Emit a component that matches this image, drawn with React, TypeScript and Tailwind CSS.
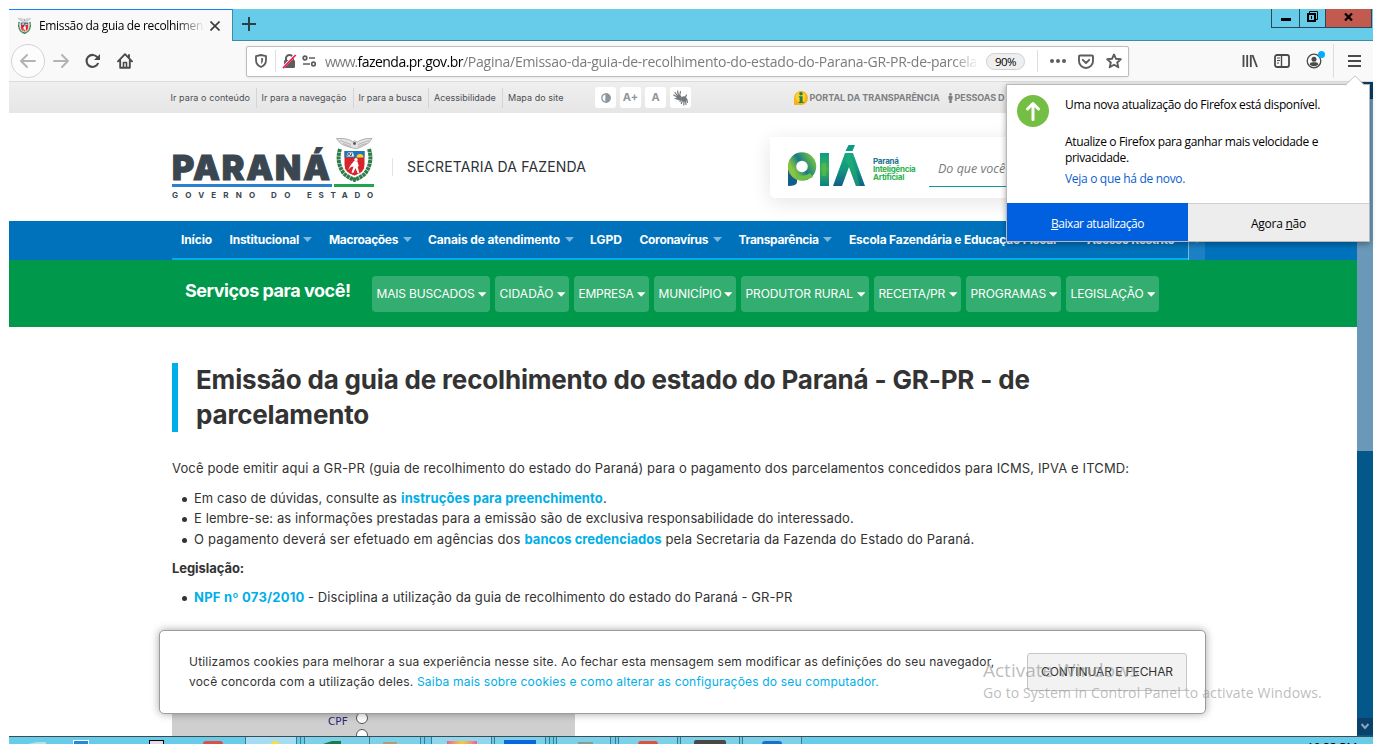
import type { ReactNode } from 'react';

const UI = "font-['Open_Sans',sans-serif]";
const SITE = "font-['Inter',sans-serif]";

function Crest({ className }: { className: string }) {
  return (
    <svg viewBox="0 0 37 44" className={className}>
      <path d="M0.500 0.500 Q9 -0.200 14 2 L17 4 L18.500 2.500 L21 4 L25 2 Q30 -0.200 36 0.500 Q33 6 28 7.500 L23 10 L18.500 10.500 L13 9 Q4 7 0.500 0.500Z" fill="#e2e2e2" stroke="#8a8a8a" strokeWidth="0.600" />
      <path d="M4 2.500 L15 6.500 M7 5.500 L15 8.500 M33 2.500 L22 6.500 M30 5.500 L22 8.500" stroke="#999" strokeWidth="0.600" />
      <circle cx="18.500" cy="5.500" r="1.400" fill="#555" />
      <path d="M4 11 Q0 24 7.500 35 Q12 40 20 42 M33 11 Q37 24 29.500 35 Q25 40 17 42" fill="none" stroke="#2f7d4b" strokeWidth="4" strokeDasharray="3.200 0.500" />
      <path d="M8 12.500 H29 V27 Q29 35 18.500 38 Q8 35 8 27Z" fill="#d8232a" stroke="#fff" strokeWidth="1" />
      <path d="M8.500 13 H28.500 V19.500 H8.500Z" fill="#1b76bd" />
      <path d="M20.500 19.500 A3.500 3.500 0 0 1 27.500 19.500Z" fill="#ffd21f" />
      <path d="M10.500 18.500 L12 14.500 H17 L18 18.500Z" fill="#fff" />
      <path d="M11.500 18 L13 15 L14.500 18 M15 18 L16 15" stroke="#222" strokeWidth="0.800" fill="none" />
      <circle cx="20" cy="21.700" r="1.700" fill="#fff" />
      <path d="M18 23 L21.500 23.500 L22.700 28 L21.700 29 L23.500 35.500 L21.700 35.500 L19.500 30 L17.300 35 L15.500 34.500 L17.500 28.500 L15 29 L12 32 L14.500 27.300Z" fill="#fff" />
    </svg>
  );
}

const Caret = ({ className }: { className: string }) => (
  <svg viewBox="0 0 9 5" className={className} fill="currentColor">
    <path d="M0 0 H9 L4.500 5Z" />
  </svg>
);

function TitleBar() {
  return (
    <div className="flex h-8 bg-[#67ccea] shadow-[inset_0_-1px_0_#3f8ca0]">
      <div className="flex h-8 w-[224px] items-center border-t border-r border-t-[#0a84ff] border-r-[#3f8ca0] bg-[#f9f9fa] pl-2">
        <Crest className="h-4 w-[15px]" />
        <div className="ml-[7px] w-[166px] text-[12px] tracking-[-0.33px] whitespace-nowrap text-black [mask-image:linear-gradient(to_right,#000_82%,transparent)]">
          Emissão da guia de recolhimen
        </div>
        <svg viewBox="0 0 10 10" className="ml-[5px] h-[10px] w-[10px]" stroke="#3c3c3d" strokeWidth="1.600">
          <path d="M0.500 0.500 L9.500 9.500 M9.500 0.500 L0.500 9.500" />
        </svg>
      </div>
      <svg viewBox="0 0 14 14" className="mt-2 ml-[9px] h-[14px] w-[14px]" stroke="#27414c" strokeWidth="2">
        <path d="M7 0 V14 M0 7 H14" />
      </svg>
      <div className="mr-px ml-auto flex h-[19px] border border-t-0 border-[#26495a]">
        <div className="flex w-[28px] items-end justify-center border-r border-[#26495a] pb-[6px]">
          <div className="h-[3px] w-[10px] bg-black" />
        </div>
        <div className="flex w-[26px] items-center justify-center border-r border-[#26495a] pb-[3px]">
          <svg viewBox="0 0 11 11" className="h-[11px] w-[11px]" fill="none" stroke="#000">
            <path d="M2.500 2 V0.500 H10.500 V8.500 H9" />
            <rect x="1" y="3" width="7" height="7" strokeWidth="2" />
            <path d="M4.500 5 V8" />
          </svg>
        </div>
        <div className="flex w-[45px] items-center justify-center bg-[#c35a50] pb-[2px]">
          <svg viewBox="0 0 9 8" className="mr-px h-2 w-[9px]" stroke="#000" strokeWidth="2.200">
            <path d="M1 0.500 L8 7.500 M8 0.500 L1 7.500" />
          </svg>
        </div>
      </div>
    </div>
  );
}

function Toolbar() {
  return (
    <div className="flex h-[41px] items-center border-b border-[#dcdcdd] bg-[#f9f9fa] text-[#4a4a4b]">
      <div className="ml-[2px] flex h-[34px] w-[34px] items-center justify-center rounded-full border border-[#d3d3d4] bg-[#fcfcfc] text-[#b3b3b4]">
        <svg viewBox="0 0 16 14" className="h-[14px] w-4" fill="none" stroke="currentColor" strokeWidth="1.900" strokeLinecap="round" strokeLinejoin="round">
          <path d="M7 1 L1 7 L7 13 M1 7 H15" />
        </svg>
      </div>
      <svg viewBox="0 0 16 14" className="ml-[8px] h-[14px] w-4 text-[#b3b3b4]" fill="none" stroke="currentColor" strokeWidth="1.900" strokeLinecap="round" strokeLinejoin="round">
        <path d="M9 1 L15 7 L9 13 M15 7 H1" />
      </svg>
      <svg viewBox="0 0 16 16" className="ml-4 h-4 w-4" fill="none" stroke="currentColor" strokeWidth="2.100">
        <path d="M13.200 10 A6 6 0 1 1 12.500 4.500" />
        <path d="M15 1 V7 H9Z" fill="currentColor" stroke="none" />
      </svg>
      <svg viewBox="0 0 16 16" className="ml-[16px] h-4 w-4" fill="none" stroke="currentColor" strokeWidth="1.900" strokeLinecap="round" strokeLinejoin="round">
        <path d="M1 8.300 L8 1.200 L15 8.300 M3.200 7.500 V14.800 H12.800 V7.500 M12 2 V4.500" />
        <path d="M6.500 14 V9.500 H9.500 V14" strokeWidth="1.600" />
      </svg>
      <div className="ml-[113px] flex h-[31px] w-[883px] items-center rounded-[2px] border border-[#bdbdbe] bg-white shadow-[0_1px_3px_rgba(0,0,0,0.08)]">
        <svg viewBox="0 0 12 14" className="ml-[8px] h-[14px] w-3" fill="none" stroke="#5d5d5e" strokeWidth="1.800">
          <path d="M6 1 L11 2.200 V6 Q11 11 6 13 Q1 11 1 6 V2.200Z" strokeLinejoin="round" />
          <path d="M6.200 4 V10 Q8 9 8.200 4.300Z" fill="#5d5d5e" stroke="none" />
        </svg>
        <div className="ml-2 h-[22px] w-px bg-[#dedede]" />
        <svg viewBox="0 0 15 15" className="ml-[6px] h-[15px] w-[15px]">
          <path d="M4 6 V4.500 A3.500 3.500 0 0 1 11 4.500 V6" fill="none" stroke="#5d5d5e" strokeWidth="2" />
          <rect x="2" y="6" width="11" height="8" rx="1.200" fill="#5d5d5e" />
          <path d="M0.500 14 L13 1" stroke="#fff" strokeWidth="2.600" />
          <path d="M1 14.200 L13.700 1" stroke="#ff1150" strokeWidth="1.700" />
        </svg>
        <svg viewBox="0 0 15 12" className="ml-[5px] h-3 w-[15px]" fill="none" stroke="#5d5d5e" strokeWidth="1.700">
          <circle cx="3" cy="3" r="1.800" />
          <path d="M7 3 H13 M1 9 H8" />
          <circle cx="11.500" cy="9" r="1.800" />
        </svg>
        <div className="ml-[8px] flex w-[654px] pt-px text-[14px] leading-5 whitespace-nowrap text-[#7b7b7c] [mask-image:linear-gradient(to_right,#000_96%,transparent)]">
          <span className="w-[32.5px] shrink-0 tracking-[-0.98px]">www.</span>
          <span className="w-[105.5px] shrink-0 tracking-[-0.53px] text-black">fazenda.pr.gov.br</span>
          <span className="tracking-[-0.26px]">/Pagina/Emissao-da-guia-de-recolhimento-do-estado-do-Parana-GR-PR-de-parcela</span>
        </div>
        <div className="ml-[7px] flex h-[17px] w-[39px] items-center justify-center rounded-full border border-[#d0d0d1] bg-[#efefef] pt-px text-[11.500px] tracking-[-0.6px] text-black">90%</div>
        <div className="ml-[12px] h-[22px] w-px bg-[#dedede]" />
        <svg viewBox="0 0 16 4" className="ml-[12px] h-1 w-4" fill="#5d5d5e">
          <circle cx="2" cy="2" r="2" />
          <circle cx="8" cy="2" r="2" />
          <circle cx="14" cy="2" r="2" />
        </svg>
        <svg viewBox="0 0 16 15" className="ml-3 h-[15px] w-4" fill="none" stroke="#5d5d5e" strokeWidth="1.900" strokeLinecap="round" strokeLinejoin="round">
          <path d="M2 1.500 H14 Q15 1.500 15 2.500 V7 A7 7 0 0 1 1 7 V2.500 Q1 1.500 2 1.500Z M4.800 5.800 L8 9 L11.200 5.800" />
        </svg>
        <svg viewBox="0 0 16 16" className="ml-3 h-4 w-4" fill="none" stroke="#5d5d5e" strokeWidth="1.900" strokeLinejoin="round">
          <path d="M8 1.500 L10 5.800 L14.800 6.300 L11.200 9.500 L12.300 14.300 L8 11.800 L3.700 14.300 L4.800 9.500 L1.200 6.300 L6 5.800Z" />
        </svg>
      </div>
      <svg viewBox="0 0 16 14" className="ml-[113px] h-[14px] w-4" stroke="currentColor" strokeWidth="1.800" fill="none">
        <path d="M1.500 1 V13 M5.200 1 V13 M8.800 1 V13 M10.500 1 L15 13" />
      </svg>
      <svg viewBox="0 0 16 14" className="ml-[16px] h-[14px] w-4" stroke="currentColor" strokeWidth="1.800" fill="none">
        <rect x="1" y="1" width="14" height="12" rx="2" />
        <path d="M7.500 1 V13" strokeWidth="1.400" />
        <path d="M3 4 H6 M3 6.500 H6 M3 9 H5" strokeWidth="1" />
      </svg>
      <div className="relative ml-[16px] h-4 w-4">
        <svg viewBox="0 0 16 16" className="h-4 w-4">
          <circle cx="8" cy="8" r="6.800" fill="none" stroke="#4a4a4b" strokeWidth="1.300" />
          <circle cx="8" cy="6.200" r="2.500" fill="#4a4a4b" />
          <path d="M3.500 11.500 Q4 9.300 6.500 9.300 H9.500 Q12 9.300 12.500 11.500 Q10.500 13.300 8 13.300 Q5.500 13.300 3.500 11.500Z" fill="#4a4a4b" />
        </svg>
        <div className="absolute -top-[2px] -right-[3px] h-[7px] w-[7px] rounded-full bg-[#00aeff]" />
      </div>
      <div className="ml-[11px] h-[34px] w-px bg-[#dcdcdd]" />
      <svg viewBox="0 0 13 12" className="ml-[14px] h-3 w-[13px]" stroke="currentColor" strokeWidth="2">
        <path d="M0 1 H13 M0 6 H13 M0 11 H13" />
      </svg>
    </div>
  );
}

const accessLinks: [string, string][] = [
  ['Ir para o conteúdo', 'w-[91px] tracking-[0.08px]'],
  ['Ir para a navegação', 'w-[97px] tracking-[0.04px]'],
  ['Ir para a busca', 'w-[75.5px]'],
  ['Acessibilidade', 'w-[74px]'],
  ['Mapa do site', 'w-[79px] tracking-[0.06px]'],
];

function AccessButton({ children }: { children: ReactNode }) {
  return <div className="mr-1 flex h-[21px] w-[21px] items-center justify-center rounded-[3px] bg-white text-[11px] font-bold text-[#8f969d]">{children}</div>;
}

function AccessBar() {
  return (
    <div className="flex h-[31px] items-center bg-gradient-to-b from-[#efefef] to-[#e6e6e6] pl-[161.5px] text-[9px] whitespace-nowrap text-[#4c4f54]">
      {accessLinks.map(([label, cls], i) => (
        <div key={label} className={`relative flex h-5 shrink-0 items-center ${cls}`}>
          {label}
          {i < 4 && <span className="absolute right-[5px] h-5 w-px bg-[#d5d5d5]" />}
        </div>
      ))}
      <div className="ml-[8px] flex w-[197.5px] shrink-0">
        <AccessButton>
          <svg viewBox="0 0 10 10" className="h-[10px] w-[10px]" stroke="#8f969d" fill="none" strokeWidth="1.300">
            <circle cx="5" cy="5" r="4.200" />
            <path d="M5 1 A4 4 0 0 1 5 9Z" fill="#8f969d" />
          </svg>
        </AccessButton>
        <AccessButton>A+</AccessButton>
        <AccessButton>A</AccessButton>
        <AccessButton>
          <svg viewBox="0 0 16 16" className="h-4 w-4" fill="none" stroke="#74777a" strokeLinecap="round">
            <ellipse cx="6" cy="7.500" rx="2.500" ry="2.600" fill="#74777a" stroke="none" />
            <path d="M4.500 6 L2 2.500 M5.500 5.500 L4.500 1 M6.700 5.500 L7.500 1.500 M4 7 L0.800 5 M4 8.800 L2 8.500 M6 10 L8 9" strokeWidth="1.200" />
            <path d="M8.500 7 Q11 5.500 13 7 L14.500 9.500 L12.500 12 L9 11 L7.800 9.500Z" fill="#74777a" stroke="none" />
            <path d="M12.500 7 L13.500 5 M14 10 L14.500 12.500 M12.500 11 L13 14.500 M11 11 L10.800 15 M9.500 10.500 L8.300 13.500 M8.500 9.500 L7 11.500" strokeWidth="1.200" />
          </svg>
        </AccessButton>
      </div>
      <svg viewBox="0 0 16 16" className="h-4 w-4 shrink-0">
        <path d="M1 15 V8 A7 7 0 1 1 8 15Z" fill="#f7b41a" />
        <circle cx="7.500" cy="7" r="5" fill="#fbd337" />
        <circle cx="8" cy="3.800" r="1.800" fill="#28803e" />
        <path d="M5.800 6.300 H9.600 V12 H10.700 V13 H5.500 V12 H6.600 V7.300 H5.800Z" fill="#28803e" />
      </svg>
      <span className="ml-px w-[138px] shrink-0 font-bold text-[#7d7f82]">PORTAL DA TRANSPARÊNCIA</span>
      <svg viewBox="0 0 5 10" className="h-[10px] w-[5px] shrink-0" fill="#7d7f82">
        <circle cx="2.500" cy="1.400" r="1.300" />
        <path d="M0.500 3 H4.500 V6.500 H3.700 V10 H1.300 V6.500 H0.500Z" />
      </svg>
      <span className="ml-[2px] shrink-0 font-bold tracking-[-0.08px] text-[#7d7f82]">PESSOAS D</span>
    </div>
  );
}

function PiaLogo() {
  return (
    <svg viewBox="0 0 78 42" className="h-[42px] w-[78px]">
      <defs>
        <linearGradient id="ring" x1="0" y1="0.600" x2="1" y2="0">
          <stop offset="0" stopColor="#8bc540" />
          <stop offset="0.450" stopColor="#157c86" />
          <stop offset="1" stopColor="#6fbf47" />
        </linearGradient>
        <linearGradient id="stem" x1="0" y1="0" x2="0" y2="1">
          <stop offset="0" stopColor="#0d9b83" />
          <stop offset="0.500" stopColor="#3fb455" />
          <stop offset="1" stopColor="#087f86" />
        </linearGradient>
        <linearGradient id="peak" x1="0" y1="0" x2="0" y2="1">
          <stop offset="0" stopColor="#18a886" />
          <stop offset="0.500" stopColor="#12977d" />
          <stop offset="1" stopColor="#125d8c" />
        </linearGradient>
      </defs>
      <path d="M0 21 L9 26 V37 Q9 41 0 41Z" fill="#125d8c" />
      <circle cx="14" cy="21.500" r="10" fill="none" stroke="url(#ring)" strokeWidth="8.500" />
      <path d="M6 27 Q14 34 22 28 L25 32 Q17 37 9 34.500Z" fill="#6fbf47" />
      <rect x="32" y="8" width="9" height="33" fill="url(#stem)" />
      <path d="M34 18 H38 V31 H34Z" fill="#5dbb46" opacity="0.700" />
      <path d="M45 41 L57 8 H65 L77 41 H68 L61 22 L54 41Z" fill="url(#peak)" />
      <path d="M57 14 L61 9 L66 20 L72 41 L68 41 L61 22Z" fill="#20b46b" opacity="0.550" />
      <path d="M57.500 6 L60.500 0 H67 L64.500 6Z" fill="#0d9b83" />
    </svg>
  );
}

function SiteHeader() {
  return (
    <div className="flex h-[108px] pl-[163px]">
      <div className="w-[220px] pt-[25px]">
        <div className="flex h-[45px]">
          <div className="w-[164px] pt-[8px] text-[34px] leading-[44px] font-black tracking-[1.75px] text-[#3a4650] [-webkit-text-stroke:1px_#3a4650]">PARANÁ</div>
          <Crest className="h-[44px] w-[37px]" />
        </div>
        <div className="mt-[1px] flex gap-[2px]">
          <div className="h-[3px] w-[160px] bg-[#2d7fcf]" />
          <div className="h-[3px] w-[40px] bg-[#1fa54f]" />
        </div>
        <div className="flex text-[8px] leading-[16px] font-bold text-[#3a4650]">
          <span className="w-[99px] tracking-[7.150px]">GOVERNO</span>
          <span className="w-[36px] tracking-[7.400px]">DO</span>
          <span className="tracking-[6.700px]">ESTADO</span>
        </div>
      </div>
      <div className="mt-[45px] h-[18px] w-px bg-[#e3e3e3]" />
      <div className="mt-[44px] ml-[14px] w-[363px] text-[14px] leading-5 tracking-[0.15px] text-[#2c3238]">SECRETARIA DA FAZENDA</div>
      <div className="mt-[24px] flex h-[61px] w-[400px] rounded-bl-[5px] bg-white pt-[8px] pl-[18px] shadow-[0_4px_20px_rgba(0,0,0,0.11)]">
        <PiaLogo />
        <div className="mt-[12px] ml-[7px] w-[56px] text-[8px] leading-[8.200px] font-bold tracking-[-0.25px] text-[#2cb24a]">
          <div className="text-[#24718f]">Paraná</div>
          <div>Inteligência</div>
          <div>Artificial</div>
        </div>
        <div className={`${UI} h-[42px] flex-1 border-b border-[#0b9a96] pt-[14px] pl-[9px] text-[12.500px] leading-5 whitespace-nowrap text-[#7a7a7a] italic`}>
          Do que você
        </div>
      </div>
    </div>
  );
}

const navItems: [string, string, boolean][] = [
  ['Início', 'w-[48.5px] tracking-[-0.13px]', false],
  ['Institucional', 'w-[99.5px] tracking-[-0.23px]', true],
  ['Macroações', 'w-[99px] tracking-[-0.35px]', true],
  ['Canais de atendimento', 'w-[162px] tracking-[-0.12px]', true],
  ['LGPD', 'w-[49.5px]', false],
  ['Coronavírus', 'w-[99px] tracking-[-0.31px]', true],
  ['Transparência', 'w-[110.5px] tracking-[-0.33px]', true],
  ['Escola Fazendária e Educação Fiscal', 'w-[238px] tracking-[-0.21px]', false],
  ['Acesso Restrito', 'w-[101px] tracking-[-0.33px]', false],
];

function NavBar() {
  return (
    <div className="flex h-[39px] bg-[#0072bc] pl-[163px]">
      <div className="flex h-[39px] border-b-2 border-[#00aeef] pl-[9px] text-[12px] leading-[38px] font-bold text-white">
        {navItems.map(([label, cls, caret]) => (
          <div key={label} className={`flex shrink-0 items-center whitespace-nowrap ${cls}`}>
            {label}
            {caret && <Caret className="ml-[4.5px] h-[5px] w-[9px] text-[#7fb8dd]" />}
          </div>
        ))}
      </div>
      <div className="flex h-[39px] w-[17px] items-center justify-center border-l border-[#7fb8dd] bg-[#1b80c4]">
        <Caret className="h-[5px] w-2 text-white" />
      </div>
    </div>
  );
}

const services: [string, string][] = [
  ['MAIS BUSCADOS', 'w-[118px] tracking-[-0.17px]'],
  ['CIDADÃO', 'w-[74px] tracking-[0.03px]'],
  ['EMPRESA', 'w-[75px] tracking-[-0.23px]'],
  ['MUNICÍPIO', 'w-[82px] tracking-[-0.12px]'],
  ['PRODUTOR RURAL', 'w-[128px] tracking-[-0.13px]'],
  ['RECEITA/PR', 'w-[87px] tracking-[-0.26px]'],
  ['PROGRAMAS', 'w-[95px] tracking-[-0.09px]'],
  ['LEGISLAÇÃO', 'w-[93px] tracking-[-0.11px]'],
];

function ServicesBar() {
  return (
    <div className="flex h-[67px] bg-[#00984a] pt-4 pl-[176px] text-white">
      <div className="w-[187px] text-[18px] leading-[30px] font-bold tracking-[-0.47px]">Serviços para você!</div>
      <div className="flex gap-[5px]">
        {services.map(([label, cls]) => (
          <div key={label} className={`flex h-9 items-center justify-between rounded-[4px] bg-[#34ad70] pr-1 pl-[4.5px] text-[12px] whitespace-nowrap ${cls}`}>
            {label}
            <Caret className="h-[5px] w-[8.500px]" />
          </div>
        ))}
      </div>
    </div>
  );
}

const Bullet = ({ children }: { children: ReactNode }) => (
  <li className="flex h-[20.5px] items-center whitespace-pre">
    <span className="mt-[2px] mr-[7px] ml-[10px] h-[5px] w-[5px] shrink-0 rounded-full bg-[#333]" />
    {children}
  </li>
);

function Article() {
  return (
    <main className="h-[409px] overflow-hidden bg-white pt-[36px] pl-[163px] text-[13px] text-[#333]">
      <h1 className="flex h-[69px] w-[880px] items-start border-l-[6px] border-[#00aee8] pl-[18px] text-[26px] leading-[35px] font-bold tracking-[-0.18px]">
        <span className="-mt-px block">Emissão da guia de recolhimento do estado do Paraná - GR-PR - de parcelamento</span>
      </h1>
      <p className="mt-[26px] h-[20px] leading-5 tracking-[0.13px] whitespace-nowrap">
        Você pode emitir aqui a GR-PR (guia de recolhimento do estado do Paraná) para o pagamento dos parcelamentos concedidos para ICMS, IPVA e ITCMD:
      </p>
      <ul className="mt-[10px]">
        <Bullet>
          <span className="w-[207px] tracking-[0.06px]">Em caso de dúvidas, consulte as </span>
          <b className="tracking-[0.11px] text-[#00aee8]">instruções para preenchimento</b>.
        </Bullet>
        <Bullet>
          <span className="tracking-[0.1px]">E lembre-se: as informações prestadas para a emissão são de exclusiva responsabilidade do interessado.</span>
        </Bullet>
        <Bullet>
          <span className="w-[330.500px] tracking-[0.19px]">O pagamento deverá ser efetuado em agências dos </span>
          <b className="w-[141px] tracking-[0.03px] text-[#00aee8]">bancos credenciados</b>
          <span className="tracking-[0.15px]">pela Secretaria da Fazenda do Estado do Paraná.</span>
        </Bullet>
      </ul>
      <p className="mt-[8px] h-5 leading-5 font-bold tracking-[-0.07px]">Legislação:</p>
      <ul className="mt-[10px]">
        <Bullet>
          <b className="w-[114px] tracking-[0.23px] text-[#00aee8]">NPF nº 073/2010</b>
          <span className="tracking-[0.08px]">- Disciplina a utilização da guia de recolhimento do estado do Paraná - GR-PR</span>
        </Bullet>
      </ul>
      <div className="mt-[77px] h-[80px] w-[403px] bg-[#cfcfcf] pt-[24px] pl-[156px] font-['DejaVu_Sans',sans-serif] text-[10.500px] text-[#26267c]">
        <div className="flex h-[17px] items-center gap-[7px]">
          <span className="mt-[8px] w-[21px]">CPF</span>
          <span className="h-3 w-3 rounded-full border border-[#555] bg-white" />
        </div>
        <div className="flex h-[17px] items-center pl-[28px]">
          <span className="h-3 w-3 rounded-full border border-[#555] bg-white" />
        </div>
      </div>
    </main>
  );
}

function CookieNotice() {
  return (
    <div className="absolute top-[630px] left-[159px] flex h-[84px] w-[1047px] items-center rounded-[5px] border border-[#9c9c9c] bg-white pl-[29px] text-[12px] leading-5 whitespace-nowrap text-[#333] shadow-[0_0_9px_rgba(0,0,0,0.35)]">
      <div className="w-[838px]">
        <div className="tracking-[0.2px]">Utilizamos cookies para melhorar a sua experiência nesse site. Ao fechar esta mensagem sem modificar as definições do seu navegador,</div>
        <div className="tracking-[0.19px]">
          você concorda com a utilização deles. <span className="text-[#00aee8]">Saiba mais sobre cookies e como alterar as configurações do seu computador.</span>
        </div>
      </div>
      <div className="flex h-[38px] w-[160px] items-center justify-center rounded-[3px] border border-[#c6c6c6] bg-[#f2f2f2] pb-px tracking-[-0.09px]">CONTINUAR E FECHAR</div>
    </div>
  );
}

function UpdatePopup() {
  return (
    <div className={`${UI} absolute top-[84px] left-[1006px] flex h-[158px] w-[364px] flex-col border border-[#b9b9b9] bg-white text-[12px] text-black shadow-[0_2px_6px_rgba(0,0,0,0.35)]`}>
      <svg viewBox="0 0 20 11" className="absolute -top-[10px] left-[338px] h-[11px] w-5">
        <path d="M0 11 L10 1 L20 11Z" fill="#fff" />
        <path d="M0 10.500 L10 0.800 L20 10.500" fill="none" stroke="#c4c4c4" />
      </svg>
      <div className="flex flex-1 pt-[10px] pl-[10px]">
        <svg viewBox="0 0 32 32" className="h-8 w-8">
          <circle cx="16" cy="16" r="16" fill="#74bf43" />
          <path d="M16 24.500 V9 M10.500 14 L16 8.500 L21.500 14" fill="none" stroke="#fff" strokeWidth="3" strokeLinecap="round" strokeLinejoin="round" />
        </svg>
        <div className="ml-4 leading-4 tracking-[-0.35px] whitespace-nowrap">
          <div className="mt-[2px]">Uma nova atualização do Firefox está disponível.</div>
          <div className="mt-[21px]">Atualize o Firefox para ganhar mais velocidade e</div>
          <div>privacidade.</div>
          <div className="mt-[5px] tracking-[-0.31px] text-[#0b60cf]">Veja o que há de novo.</div>
        </div>
      </div>
      <div className="flex h-[38px]">
        <div className="flex w-[181px] items-center justify-center bg-[#0060df] pt-[3px] tracking-[-0.47px] text-white">
          <span><u>B</u>aixar atualização</span>
        </div>
        <div className="flex flex-1 items-center justify-center border-t border-[#cfcfcf] bg-[#ededed] pt-[2px] tracking-[-0.25px]">
          <span>Agora <u>n</u>ão</span>
        </div>
      </div>
    </div>
  );
}

const tasks: [string, string][] = [
  ['w-[4px]', ''],
  ['w-[65px] bg-[#7bd0ea] pl-[18px]', 'h-[3px] w-[18px] bg-[#1f7a45] [clip-path:polygon(50%_0,100%_0,100%_100%,0_100%)]'],
  ['w-[51px] bg-[#7bd0ea] pl-[13px]', 'h-[2px] w-[14px] bg-[#b39a7b]'],
  ['w-[4px]', ''],
  ['w-[7px]', ''],
  ['w-[60px] bg-[#8fd6ee] pl-[15px]', 'h-[3px] w-[30px] bg-gradient-to-r from-[#e8618c] via-[#f2cf33] to-[#e8618c]'],
  ['w-[3px]', ''],
  ['w-[51px] bg-[#7bd0ea] pl-[9px]', 'h-1 w-8 bg-[#0a66dd]'],
  ['w-[4px]', ''],
  ['w-[4px]', ''],
  ['w-[3px]', ''],
  ['w-[54px] bg-[#7bd0ea] pl-[21px]', 'h-[2px] w-[15px] bg-[#8d9a93]'],
  ['w-[5px]', ''],
  ['w-[3px]', ''],
  ['w-[59px] bg-[#7bd0ea] pl-[19px]', 'h-[3px] w-5 rounded-t-full bg-[#e0513f]'],
  ['w-[3px]', ''],
  ['w-[59px] bg-[#7bd0ea] pl-[13px]', 'h-1 w-8 rounded-t-[2px] bg-[#484848]'],
  ['w-[3px]', ''],
  ['w-[59px] bg-[#7bd0ea] pl-[19px]', 'h-[3px] w-5 rounded-t-full bg-[#1f6fca]'],
];

function Taskbar() {
  return (
    <div className={`${UI} flex h-2 overflow-hidden border-t border-[#3e4c52] bg-[#67ccea]`}>
      <div className="flex w-[236px] shrink-0 items-end">
        <div className="ml-[19px] h-[2px] w-[18px] bg-[#b9e2e6] [clip-path:polygon(50%_0,100%_0,100%_100%,0_100%)]" />
        <div className="ml-[27px] h-1 w-4 border border-b-0 border-white bg-[#2289dd]" />
        <div className="ml-[60px] h-1 w-[15px] border border-b-0 border-black bg-[#dcdcec]" />
        <div className="ml-[39px] h-[3px] w-5 rounded-t-full bg-[#dd5044]" />
      </div>
      <div className="flex w-[52px] shrink-0 items-end border-x border-[#3d7a90] bg-[#a3dcf3] pl-[24px]">
        <svg viewBox="0 0 10 4" className="h-1 w-[10px]" fill="#f7e23c">
          <path d="M5 0 L10 4 H0Z" />
        </svg>
      </div>
      <div className="w-1 shrink-0 border-r border-[#3d7a90]" />
      {tasks.map(([cls, icon], i) => (
        <div key={i} className={`flex shrink-0 items-end border-r border-[#3d7a90] ${cls}`}>
          {icon && <div className={icon} />}
        </div>
      ))}
      <div className="mt-[3px] ml-auto h-4 w-[66px] text-[12px] leading-4 tracking-[-0.2px] text-black">10:33 PM</div>
    </div>
  );
}

export default function App() {
  return (
    <div className="relative flex h-[744px] w-[1382px] flex-col overflow-hidden bg-white pt-[9px] pr-[9px] pl-[9px]">
      <div className={UI}>
        <TitleBar />
        <Toolbar />
      </div>
      <div className={`flex h-[654px] ${SITE}`}>
        <div className="w-[1348px] overflow-hidden">
          <AccessBar />
          <SiteHeader />
          <NavBar />
          <ServicesBar />
          <Article />
        </div>
        <div className="flex w-4 flex-col bg-[#04578b]">
          <div className="h-[17px] bg-[#093c62]" />
          <div className="h-[352px] bg-[#6a98b8]" />
          <div className="mt-auto mb-[1px] flex h-[17px] items-center justify-center bg-[#0b4168]">
            <svg viewBox="0 0 8 7" className="h-[7px] w-2" fill="none" stroke="#7fa9c6" strokeWidth="2">
              <path d="M0.500 1 L4 5 L7.500 1" />
            </svg>
          </div>
        </div>
      </div>
      <Taskbar />
      <div className={SITE}>
        <CookieNotice />
      </div>
      <UpdatePopup />
      <div className={`${UI} pointer-events-none absolute top-[657px] left-[983px] whitespace-nowrap text-[#909090]/60`}>
        <div className="text-[19px] leading-[26px]">Activate Windows</div>
        <div className="text-[14px] leading-[20px] tracking-[0.13px]">Go to System in Control Panel to activate Windows.</div>
      </div>
    </div>
  );
}
